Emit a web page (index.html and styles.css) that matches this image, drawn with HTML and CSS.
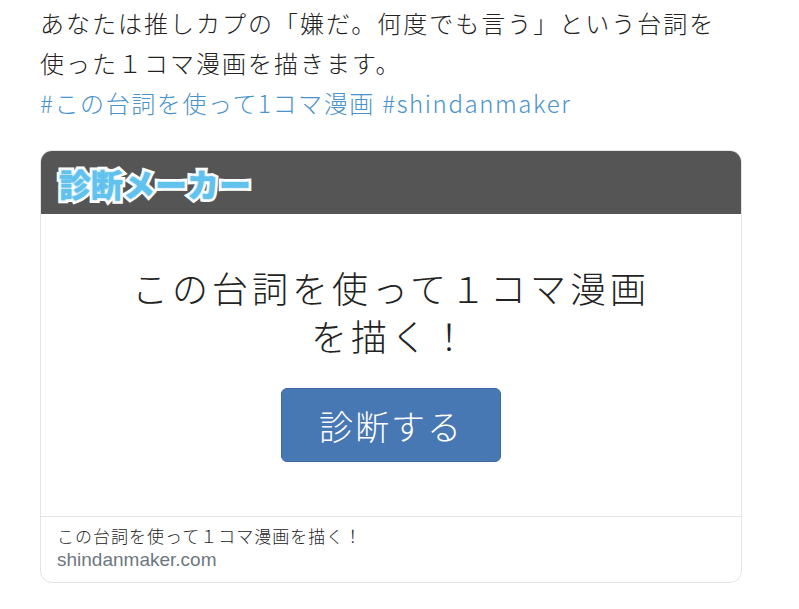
FILE: index.html
```html
<!DOCTYPE html>
<html lang="ja">
<head>
  <meta charset="UTF-8" />
  <meta name="viewport" content="width=device-width, initial-scale=1.0"/>
  <title>診断メーカー</title>
  <link rel="stylesheet" href="styles.css">
</head>
<body>
  <div class="tweet">
    <p class="tweet-text">あなたは推しカプの「嫌だ。何度でも言う」という台詞を<br>使った１コマ漫画を描きます。</p>
    <p class="tags"><a href="#">#この台詞を使って1コマ漫画</a> <a href="#">#shindanmaker</a></p>
  </div>

  <div class="card">
    <div class="card-head">
      <span class="logo">診断メーカー</span>
    </div>
    <div class="card-body">
      <h2>この台詞を使って１コマ漫画<br>を描く！</h2>
      <button type="button">診断する</button>
    </div>
    <div class="card-foot">
      <div class="foot-title">この台詞を使って１コマ漫画を描く！</div>
      <div class="foot-domain">shindanmaker.com</div>
    </div>
  </div>
</body>
</html>
```

FILE: styles.css
```css
body {
  margin: 0;
  padding: 3px 40px 0;
  background: #fff;
  color: #222;
  font-family: "Noto Sans CJK JP", "Noto Sans", sans-serif;
  font-weight: 300;
}
.tweet-text, .tags {
  margin: 0;
  font-size: 24px;
  line-height: 40px;
  letter-spacing: 2px;
}
.tags a {
  color: #4a92cc;
  text-decoration: none;
  letter-spacing: 1.6px;
}
.card {
  margin-top: 27px;
  width: 700px;
  border: 1px solid #e1e4e8;
  border-radius: 12px;
  overflow: hidden;
}
.card-head {
  background: #555555;
  height: 63px;
  display: flex;
  align-items: center;
  padding-left: 18px;
}
.logo {
  font-size: 32px;
  font-weight: 900;
  color: #62c2ee;
  -webkit-text-stroke: 6px #fff;
  paint-order: stroke fill;
  text-shadow: 0 0 2px #7cc8ee;
  line-height: 1;
}
.card-body {
  text-align: center;
  padding: 49px 0 54px;
  border-bottom: 1px solid #e1e4e8;
}
.card-body h2 {
  margin: 0;
  font-size: 36px;
  font-weight: 300;
  line-height: 48px;
  letter-spacing: 4px;
  color: #222;
}
button {
  margin-top: 29px;
  width: 220px;
  height: 74px;
  background: #4778b3;
  border: 1px solid #3d6aa0;
  border-radius: 6px;
  color: #fff;
  font-family: inherit;
  font-weight: 300;
  font-size: 34px;
  letter-spacing: 2px;
  cursor: pointer;
}
.card-foot {
  padding: 7px 16px 10px;
}
.foot-title {
  font-size: 17px;
  line-height: 24px;
  letter-spacing: 1px;
  color: #222;
}
.foot-domain {
  font-family: "Liberation Sans", "Noto Sans", sans-serif;
  font-weight: 400;
  font-size: 19px;
  line-height: 24px;
  color: #6e7781;
}
```
